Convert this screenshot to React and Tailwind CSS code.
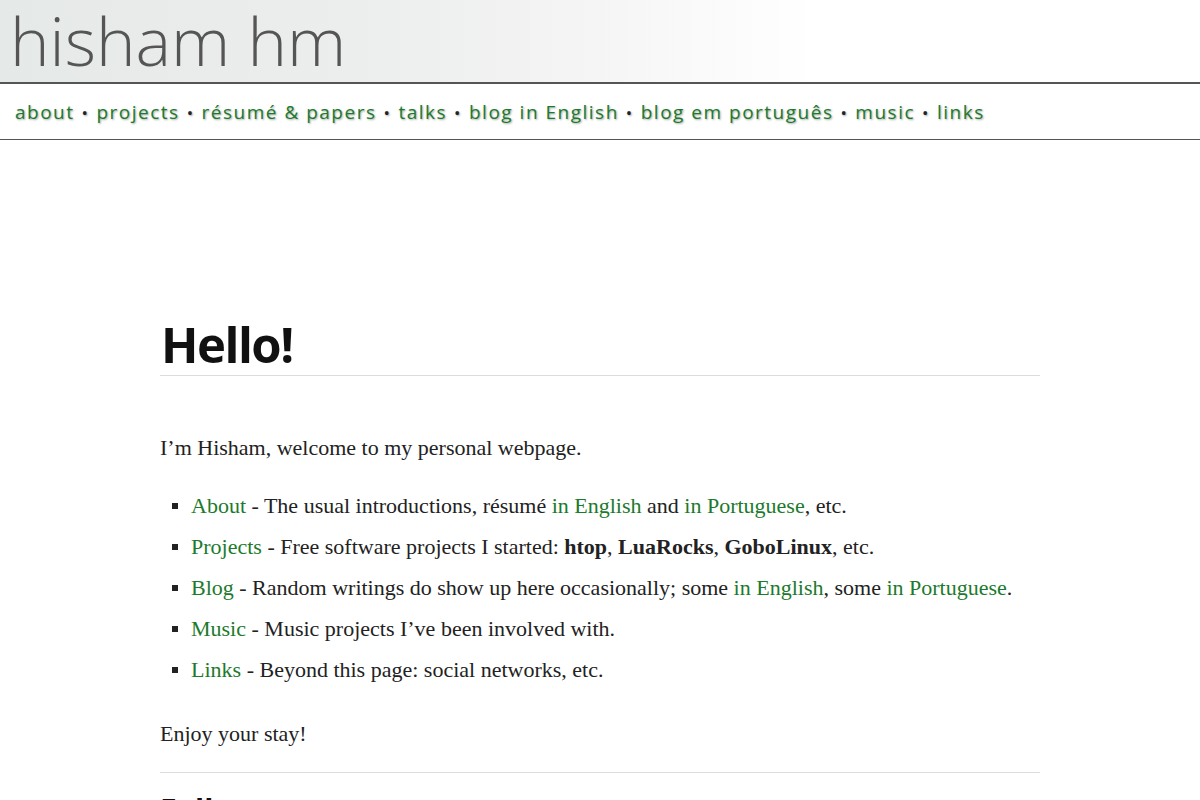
export default function App() {
  const g = "text-[#1c7a2c]";
  const navItems = ["about", "projects", "résumé & papers", "talks", "blog in English", "blog em português", "music", "links"];
  const items = [
    <><a className={g}>About</a> - The usual introductions, résumé <a className={g}>in English</a> and <a className={g}>in Portuguese</a>, etc.</>,
    <><a className={g}>Projects</a> - Free software projects I started: <b>htop</b>, <b>LuaRocks</b>, <b>GoboLinux</b>, etc.</>,
    <><a className={g}>Blog</a> - Random writings do show up here occasionally; some <a className={g}>in English</a>, some <a className={g}>in Portuguese</a>.</>,
    <><a className={g}>Music</a> - Music projects I’ve been involved with.</>,
    <><a className={g}>Links</a> - Beyond this page: social networks, etc.</>,
  ];
  return (
    <div className="min-h-[800px] bg-white">
      <header className="h-[84px] border-b-2 border-[#555] bg-[linear-gradient(90deg,#e5e9e7_0%,#eceeed_30%,#f4f5f4_50%,#fbfbfb_60%,#ffffff_68%)]">
        <h1 className="pl-[10px] text-[67px] leading-[80px] font-light text-[#555]" style={{ fontFamily: '"Open Sans", sans-serif' }}>
          hisham hm
        </h1>
      </header>
      <nav className="h-[56px] border-b border-[#555] flex items-center pl-[15px] pt-[2px] text-[19px] tracking-[1.5px] [text-shadow:1px_1px_2px_rgba(0,0,0,0.35)]" style={{ fontFamily: '"Open Sans", sans-serif' }}>
        {navItems.map((n, i) => (
          <span key={n} className="flex items-center">
            {i > 0 && <span className="text-[#222] mx-[7px] text-[17px]">•</span>}
            <a className={g}>{n}</a>
          </span>
        ))}
      </nav>
      <main className="mx-auto w-[880px] pt-[174px] text-[22px] text-[#222]" style={{ fontFamily: '"Liberation Serif", serif' }}>
        <h2 className="text-[49px] leading-[60px] font-bold tracking-[-1.5px] text-[#111] border-b border-[#dcdcdc] pb-[1px] pl-[1px]" style={{ fontFamily: '"Open Sans", sans-serif' }}>
          Hello!
        </h2>
        <p className="mt-[57px] leading-[30px]">I’m Hisham, welcome to my personal webpage.</p>
        <ul className="mt-[28px] flex flex-col gap-[11px] leading-[30px]">
          {items.map((it, i) => (
            <li key={i} className="flex items-center">
              <span className="shrink-0 w-[6px] h-[6px] bg-[#222] ml-[12px] mr-[13px]" />
              <span>{it}</span>
            </li>
          ))}
        </ul>
        <p className="mt-[34px] leading-[30px]">Enjoy your stay!</p>
        <hr className="mt-[23px] border-0 border-t border-[#dcdcdc]" />
        <h3 className="mt-[14px] text-[30px] font-bold text-[#111]" style={{ fontFamily: '"Open Sans", sans-serif' }}>Follow</h3>
      </main>
    </div>
  );
}
